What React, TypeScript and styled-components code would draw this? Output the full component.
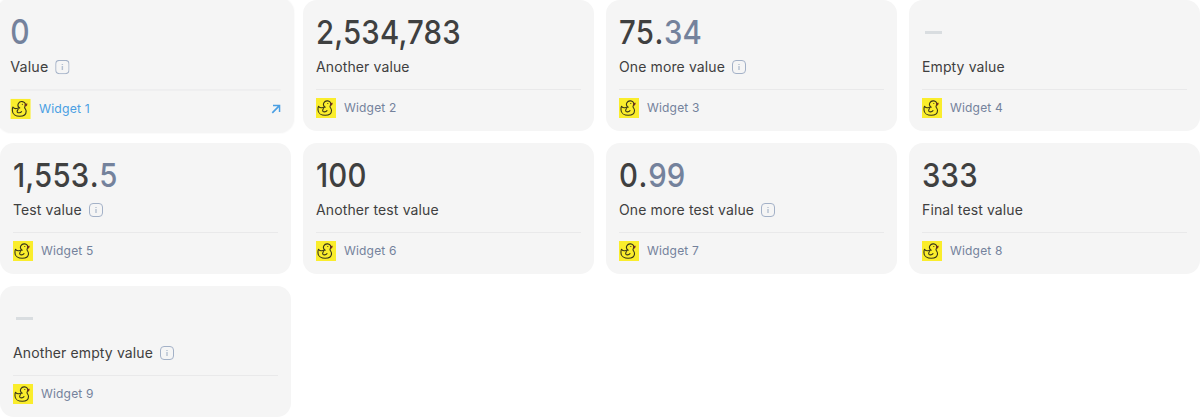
import React from 'react';
import styled, { createGlobalStyle } from 'styled-components';

const GlobalStyle = createGlobalStyle`
  * { box-sizing: border-box; }
  body { margin: 0; background: #fff; font-family: Inter, "Liberation Sans", sans-serif; overflow: hidden; }
`;

const Grid = styled.main`
  display: grid;
  grid-template-columns: repeat(4, 291px);
  grid-auto-rows: 131px;
  gap: 12px;
`;

const Card = styled.article<{ $active?: boolean }>`
  display: flex;
  flex-direction: column;
  padding: 13px;
  border-radius: 14px;
  background: #f5f5f5;
  box-shadow: ${(p) => (p.$active ? '0 0 2px rgba(0, 0, 0, 0.06)' : 'none')};
  transform: ${(p) => (p.$active ? 'scale(1.02)' : 'none')};
  cursor: pointer;
`;

const Value = styled.div<{ $muted?: boolean }>`
  height: 40px;
  font-size: 33px;
  line-height: 38px;
  font-weight: 550;
  letter-spacing: 0.2px;
  white-space: nowrap;
  transform: scaleX(0.89);
  transform-origin: left center;
  color: ${(p) => (p.$muted ? '#74829c' : '#3f4040')};
`;

const Point = styled.span`
  margin: 0 0.5px;
`;

const Fraction = styled.span`
  color: #74829c;
`;

const EmptyMark = styled.div`
  width: 17px;
  height: 3px;
  margin: 18px 0 19px 3px;
  background: #d9dde0;
`;

const Label = styled.div`
  display: flex;
  align-items: center;
  gap: 7px;
  height: 28px;
  font-size: 14px;
  line-height: 20px;
  letter-spacing: 0.12px;
  color: #3f4040;
`;

const Footer = styled.footer<{ $active?: boolean }>`
  display: flex;
  align-items: center;
  gap: 8px;
  height: 29px;
  margin-top: auto;
  padding-top: 8px;
  border-top: 1px solid #e9e9ea;
  font-size: 12px;
  line-height: 16px;
  letter-spacing: 0.18px;
  color: ${(p) => (p.$active ? '#4a9fe3' : '#74829c')};
`;

const Name = styled.span`
  flex: 1;
`;

const InfoIcon = () => (
  <svg width="14" height="14" viewBox="0 0 14 14" fill="none">
    <rect x="0.5" y="0.5" width="13" height="13" rx="3.5" stroke="#a3b1c7" />
    <path d="M7 6v4M7 4v1" stroke="#b4c0d1" strokeWidth="1.4" />
  </svg>
);

const ArrowIcon = () => (
  <svg width="10" height="10" viewBox="0 0 10 10" fill="none" stroke="#4a9fe3" strokeWidth="1.6">
    <path d="M2.500 1.700h6.500v6.500M8.800 1.900L1.800 8.900" />
  </svg>
);

const DuckIcon = () => (
  <svg width="20" height="20" viewBox="0 0 20 20" fill="none">
    <path fill="#faed2c" d="M0 0h20v20H0z" />
    <path
      d="M9.200 9.200C7.700 8.200 7.100 6.200 7.900 4.700 8.700 3.200 10.200 2.700 11.700 2.900 13.500 3.100 14.900 4.400 14.700 6.100 14.600 7.300 14 8 14 8.900 14.400 10 15.500 10.600 15.500 12.400 15.500 15.700 12.700 17.300 9.200 17.300 5.300 17.300 2.100 15.300 2 11.900 1.900 10.400 2 9 2.500 8.300 3.500 9.500 4.600 9.900 5.900 9.700 7 9.500 7.900 9 9.200 9.200M7.600 10.600C6.500 11.500 6.200 13.300 7.500 13.700 8.900 14 10.300 13.600 11 12.700"
      stroke="#37351b"
      strokeWidth="1.1"
      strokeLinecap="round"
      strokeLinejoin="round"
    />
    <circle cx="11.800" cy="5.500" r=".6" fill="#37351b" />
    <path d="M14.200 5.100l2.500-.4-.3 1.900-1.200 1.200-1-.8z" fill="#72301d" />
  </svg>
);

interface Widget {
  whole?: string;
  fraction?: string;
  label: string;
  info?: boolean;
}

const widgets: Widget[] = [
  { whole: '0', label: 'Value', info: true },
  { whole: '2,534,783', label: 'Another value' },
  { whole: '75', fraction: '34', label: 'One more value', info: true },
  { label: 'Empty value' },
  { whole: '1,553', fraction: '5', label: 'Test value', info: true },
  { whole: '100', label: 'Another test value' },
  { whole: '0', fraction: '99', label: 'One more test value', info: true },
  { whole: '333', label: 'Final test value' },
  { label: 'Another empty value', info: true },
];

export default function App() {
  return (
    <>
      <GlobalStyle />
      <Grid>
        {widgets.map((w, i) => (
          <Card key={w.label} $active={i === 0}>
            {w.whole ? (
              <Value $muted={w.whole === '0' && !w.fraction}>
                {w.whole}
                {w.fraction && (
                  <>
                    <Point>.</Point>
                    <Fraction>{w.fraction}</Fraction>
                  </>
                )}
              </Value>
            ) : (
              <EmptyMark />
            )}
            <Label>
              {w.label}
              {w.info && <InfoIcon />}
            </Label>
            <Footer $active={i === 0}>
              <DuckIcon />
              <Name>Widget {i + 1}</Name>
              {i === 0 && <ArrowIcon />}
            </Footer>
          </Card>
        ))}
      </Grid>
    </>
  );
}
